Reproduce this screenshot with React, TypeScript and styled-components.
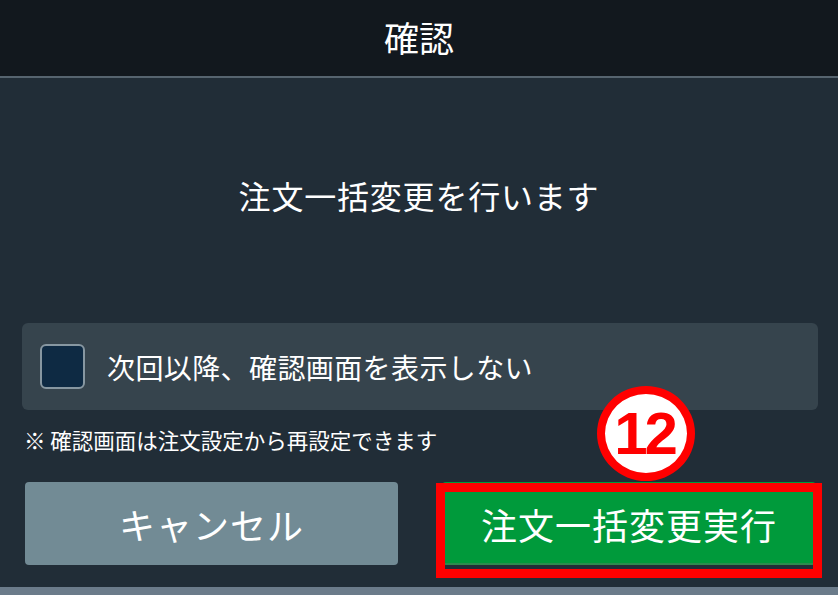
import { createGlobalStyle } from 'styled-components'
import styled from 'styled-components'

const GlobalStyle = createGlobalStyle`
  html, body {
    margin: 0;
    padding: 0;
    background: #212d37;
  }
  body {
    font-family: "Noto Sans CJK JP", "Noto Sans", sans-serif;
    color: #fff;
  }
`

export const App = () => {
  return (
    <>
      <GlobalStyle />
      <Screen>
        <Header>確認</Header>

        <Body>
          <Message>注文一括変更を行います</Message>

          <OptionPanel>
            <CheckBox />
            <OptionLabel>次回以降、確認画面を表示しない</OptionLabel>
          </OptionPanel>

          <Note>※ 確認画面は注文設定から再設定できます</Note>

          <ButtonRow>
            <Button $variant="cancel">キャンセル</Button>
            <ExecWrap>
              <Button $variant="exec">注文一括変更実行</Button>
              <Highlight />
              <StepBadge>12</StepBadge>
            </ExecWrap>
          </ButtonRow>
        </Body>

        <BottomStrip />
      </Screen>
    </>
  )
}
export default App

const Screen = styled.div`
  width: 838px;
  height: 595px;
  display: flex;
  flex-direction: column;
  background: #212d37;
  overflow: hidden;
`

const Header = styled.div`
  height: 78px;
  flex-shrink: 0;
  background: #12181e;
  border-bottom: 2px solid #56646f;
  display: flex;
  align-items: center;
  justify-content: center;
  font-size: 35px;
  padding-bottom: 4px;
  box-sizing: border-box;
`

const Body = styled.div`
  flex: 1;
  display: flex;
  flex-direction: column;
`

const Message = styled.div`
  height: 245px;
  display: flex;
  align-items: center;
  justify-content: center;
  font-size: 32px;
  letter-spacing: 0.8px;
  padding-bottom: 12px;
  box-sizing: border-box;
`

const OptionPanel = styled.div`
  margin: 0 20px 0 22px;
  height: 87px;
  border-radius: 6px;
  background: #36444d;
  display: flex;
  align-items: center;
  padding-left: 18px;
  gap: 22px;
`

const CheckBox = styled.div`
  width: 41px;
  height: 41px;
  border: 2px solid #8797a1;
  border-radius: 6px;
  background: #0e2a43;
`

const OptionLabel = styled.span`
  font-size: 28px;
  letter-spacing: 0.4px;
`

const Note = styled.div`
  height: 72px;
  padding-left: 24px;
  padding-bottom: 14px;
  box-sizing: border-box;
  display: flex;
  align-items: center;
  font-size: 21.5px;
`

const ButtonRow = styled.div`
  display: grid;
  grid-template-columns: 373px 374px;
  gap: 44px;
  padding-left: 25px;
`

const Button = styled.div<{ $variant: 'cancel' | 'exec' }>`
  height: 83px;
  border-radius: 4px;
  display: flex;
  align-items: center;
  justify-content: center;
  font-size: 36px;
  letter-spacing: 1px;
  color: #fff;
  background: ${(p) => (p.$variant === 'exec' ? '#009a3b' : '#728b95')};
  box-shadow: ${(p) => (p.$variant === 'exec' ? 'inset 0 -2px 0 #2e8a4e' : 'none')};
`

const ExecWrap = styled.div`
  position: relative;
`

const Highlight = styled.div`
  position: absolute;
  left: -6px;
  right: -6px;
  top: 1px;
  bottom: -13px;
  border: 9px solid #ff0000;
  pointer-events: none;
`

const StepBadge = styled.div`
  position: absolute;
  left: 155px;
  top: -96px;
  width: 79px;
  height: 79px;
  border: 8px solid #ff0000;
  border-radius: 50%;
  background: #fff;
  color: #ff0000;
  display: flex;
  align-items: center;
  justify-content: center;
  font-family: "Liberation Sans", Arial, sans-serif;
  font-weight: 700;
  font-size: 60px;
  letter-spacing: -3px;
  line-height: 1;
  padding-right: 3px;
  box-sizing: content-box;
`

const BottomStrip = styled.div`
  height: 8px;
  flex-shrink: 0;
  background: #6b7b8a;
`
